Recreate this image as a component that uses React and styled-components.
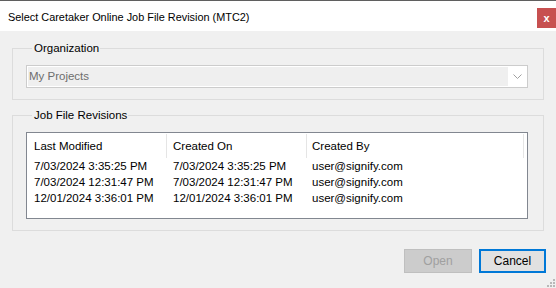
import React from 'react'
import styled, { createGlobalStyle } from 'styled-components'

const GlobalStyle = createGlobalStyle`
  html, body {
    margin: 0;
    padding: 0;
    background: #f0f0f0;
  }
  body {
    font-family: "Liberation Sans", Arial, sans-serif;
    font-size: 11.5px;
    color: #000;
  }
`

const Window = styled.div`
  width: 556px;
  height: 288px;
  display: flex;
  flex-direction: column;
  background: #f0f0f0;
  position: relative;
  overflow: hidden;
`

const TitleBar = styled.header`
  height: 30px;
  border-top: 1px solid #5f5f5f;
  background: #fff;
  display: flex;
  align-items: center;
  justify-content: space-between;
  padding-left: 8px;
`

const Title = styled.div`
  font-size: 10.9px;
  line-height: 14px;
  margin-top: 2px;
`

const CloseButton = styled.div`
  width: 19px;
  height: 20px;
  margin-top: 4px;
  background: #c75050;
  color: #fff;
  font-weight: bold;
  font-size: 11px;
  display: flex;
  align-items: center;
  justify-content: center;
`

const Body = styled.div`
  flex: 1;
  display: flex;
  flex-direction: column;
  padding: 10px 12px 0 12px;
`

const Group = styled.fieldset`
  margin: 0 0 ${p => p.$gap || 0}px 0;
  border: 1px solid #dcdcdc;
  padding: 10px 15px 11px 13px;
  min-width: 0;
`

const Legend = styled.legend`
  padding: 0 1px 0 2px;
  margin-left: 6px;
  line-height: 14px;
`

const Combo = styled.div`
  height: 19px;
  border: 1px solid #cccccc;
  background: #fff;
  display: flex;
  padding: 1px;
  box-sizing: content-box;
`

const ComboText = styled.div`
  flex: 1;
  background: #efefef;
  color: #6d6d6d;
  padding-left: 1px;
  line-height: 18px;
`

const ComboArrow = styled.div`
  width: 18px;
  display: flex;
  align-items: center;
  justify-content: center;
`

const List = styled.div`
  height: 85px;
  border: 1px solid #828790;
  background: #fff;
`

const Header = styled.div`
  display: grid;
  grid-template-columns: 140px 140px 217px;
  height: 25px;
`

const HeaderCell = styled.div`
  display: flex;
  align-items: center;
  padding-left: ${p => p.$pad}px;
  border-right: 1px solid #e5e5e5;
  margin: 1px 0 0;
`

const Row = styled.div`
  display: grid;
  grid-template-columns: 140px 140px 217px;
  height: 16px;
  line-height: 16px;
`

const Cell = styled.div`
  padding-left: ${p => p.$pad}px;
  white-space: nowrap;
`

const Footer = styled.div`
  display: flex;
  justify-content: flex-end;
  gap: 7px;
  padding-top: 18px;
  margin-right: -2px;
`

const Button = styled.div`
  width: ${p => p.$w}px;
  height: 24px;
  box-sizing: border-box;
  display: flex;
  align-items: center;
  justify-content: center;
  font-size: 12px;
  background: ${p => (p.$disabled ? '#cccccc' : '#e1e1e1')};
  border: ${p => (p.$focused ? '2px solid #0078d7' : '1px solid #bfbfbf')};
  color: ${p => (p.$disabled ? '#a0a0a0' : '#000')};
`

const Grip = styled.svg`
  position: absolute;
  right: 1px;
  bottom: 1px;
`

const rows = [
  ['7/03/2024 3:35:25 PM', '7/03/2024 3:35:25 PM', 'user@signify.com'],
  ['7/03/2024 12:31:47 PM', '7/03/2024 12:31:47 PM', 'user@signify.com'],
  ['12/01/2024 3:36:01 PM', '12/01/2024 3:36:01 PM', 'user@signify.com'],
]

const pads = [7, 6, 5]

export default function App() {
  return (
    <Window>
      <GlobalStyle />
      <TitleBar>
        <Title>Select Caretaker Online Job File Revision (MTC2)</Title>
        <CloseButton>x</CloseButton>
      </TitleBar>
      <Body>
        <Group $gap={8}>
          <Legend>Organization</Legend>
          <Combo>
            <ComboText>My Projects</ComboText>
            <ComboArrow>
              <svg width="9" height="5" viewBox="0 0 9 5">
                <path d="M0.5 0.5 L4.5 4.5 L8.5 0.5" fill="none" stroke="#a0a0a0" strokeWidth="1" />
              </svg>
            </ComboArrow>
          </Combo>
        </Group>
        <Group>
          <Legend>Job File Revisions</Legend>
          <List>
            <Header>
              <HeaderCell $pad={7}>Last Modified</HeaderCell>
              <HeaderCell $pad={6}>Created On</HeaderCell>
              <HeaderCell $pad={5}>Created By</HeaderCell>
            </Header>
            {rows.map((r, i) => (
              <Row key={i}>
                {r.map((c, j) => (
                  <Cell key={j} $pad={pads[j]}>{c}</Cell>
                ))}
              </Row>
            ))}
          </List>
        </Group>
        <Footer>
          <Button $w={68} $disabled>Open</Button>
          <Button $w={67} $focused>Cancel</Button>
        </Footer>
      </Body>
      <Grip width="8" height="8" viewBox="0 0 8 8">
        <g fill="#b8b8b8">
          <rect x="6" y="0" width="2" height="2" />
          <rect x="3" y="3" width="2" height="2" />
          <rect x="6" y="3" width="2" height="2" />
          <rect x="0" y="6" width="2" height="2" />
          <rect x="3" y="6" width="2" height="2" />
          <rect x="6" y="6" width="2" height="2" />
        </g>
      </Grip>
    </Window>
  )
}
